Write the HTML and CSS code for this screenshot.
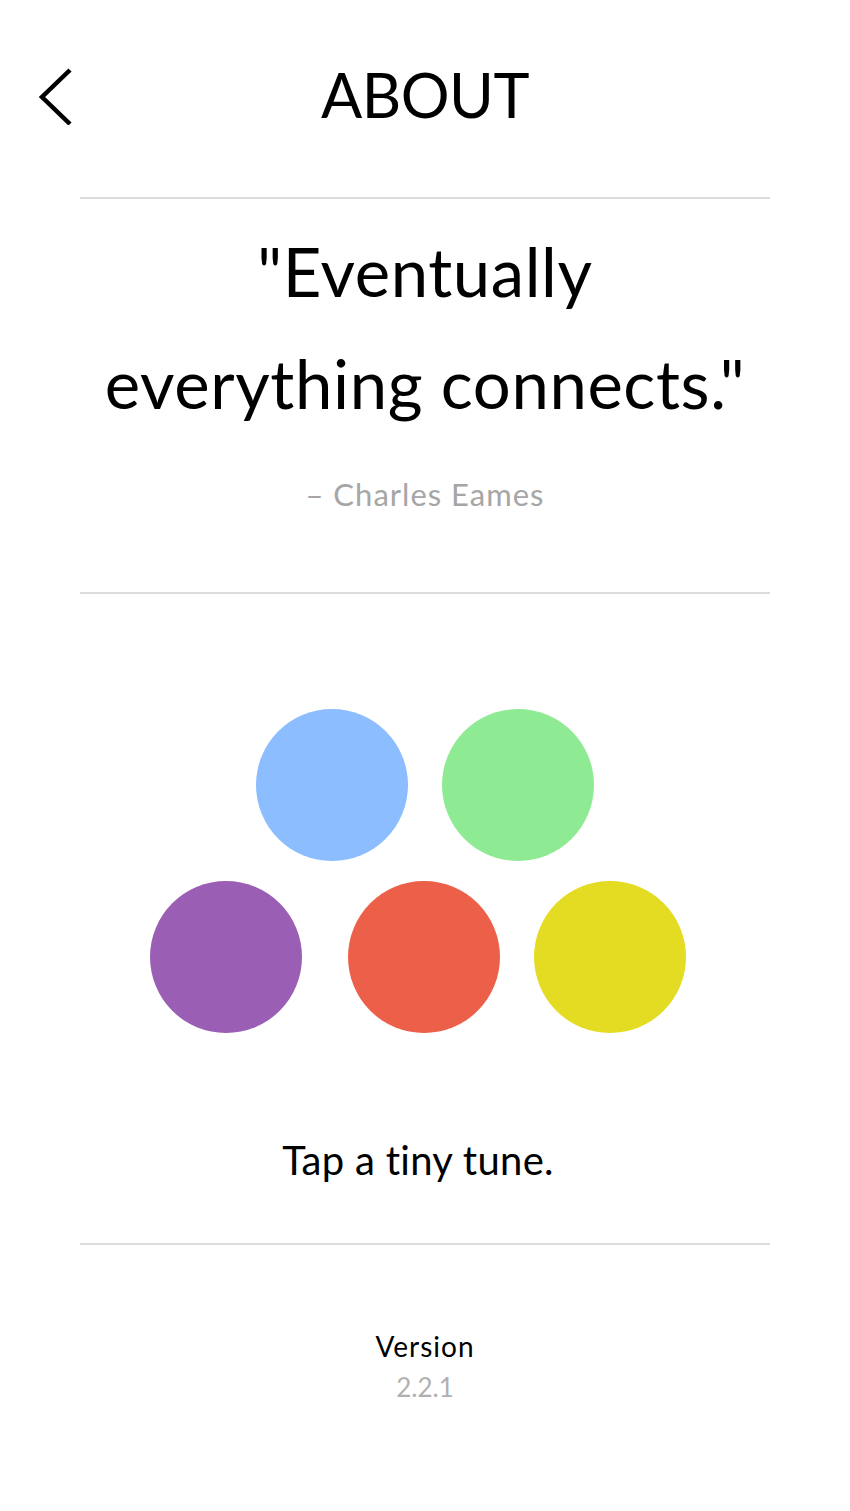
FILE: index.html
```html
<!DOCTYPE html>
<html>
<head>
<meta charset="utf-8">
<link rel="stylesheet" href="styles.css">
</head>
<body>
<div class="page">
  <header class="header">
    <a class="back" aria-label="Back">
      <svg width="40" height="60" viewBox="0 0 40 60"><path d="M33 5 L5 32 L33 59" fill="none" stroke="#000" stroke-width="4.5"/></svg>
    </a>
    <h1 class="title">ABOUT</h1>
    <span></span>
  </header>
  <div class="rule"></div>
  <section class="quote">
    <p class="quote-text">"Eventually<br>everything connects."</p>
    <p class="author">– Charles Eames</p>
  </section>
  <div class="rule"></div>
  <section class="tunes">
    <div class="dots">
      <div class="row">
        <span class="dot blue"></span>
        <span class="dot green"></span>
      </div>
      <div class="row row-bottom">
        <span class="dot purple"></span>
        <span class="dot red"></span>
        <span class="dot yellow"></span>
      </div>
    </div>
    <p class="tagline">Tap a tiny tune.</p>
  </section>
  <div class="rule"></div>
  <section class="version">
    <p class="version-label">Version</p>
    <p class="version-num">2.2.1</p>
  </section>
</div>
</body>
</html>
```

FILE: styles.css
```css
html, body {
  margin: 0;
  padding: 0;
  background: #fff;
}
body {
  font-family: Lato, "Open Sans", sans-serif;
  color: #000;
}
p, h1 { margin: 0; }
.page {
  width: 850px;
}
.header {
  display: grid;
  grid-template-columns: 1fr auto 1fr;
  align-items: center;
  height: 197px;
}
.back {
  display: block;
  width: 40px;
  height: 60px;
  margin-top: -8px;
  margin-left: 37px;
}
.back svg { display: block; }
.title {
  font-weight: 400;
  font-size: 61px;
  letter-spacing: -0.5px;
  margin-top: -8px;
  line-height: 1;
}
.rule {
  height: 2px;
  background: #dcdcdc;
  margin: 0 80px;
}
.quote {
  text-align: center;
  padding-top: 16px;
  height: 393px;
  box-sizing: border-box;
}
.quote-text {
  font-size: 67px;
  line-height: 112px;
  font-weight: 400;
  letter-spacing: 0.6px;
}
.author {
  margin-top: 36px;
  font-size: 31px;
  color: #a6a6a6;
  letter-spacing: 1px;
}
.tunes {
  height: 649px;
  box-sizing: border-box;
  padding-top: 115px;
}
.dots {
  display: flex;
  flex-direction: column;
  align-items: center;
  gap: 20px;
}
.row {
  display: flex;
  gap: 34px;
  justify-content: center;
}
.row-bottom {
  gap: 34px;
  margin-right: 14px;
}
.row-bottom .purple { margin-right: 12px; }
.dot {
  display: block;
  width: 152px;
  height: 152px;
  border-radius: 50%;
}
.blue { background: #8bbdff; }
.green { background: #8eea93; }
.purple { background: #9a5eb4; }
.red { background: #ec604a; }
.yellow { background: #e4dc23; }
.tagline {
  text-align: center;
  font-size: 40px;
  margin-top: 103px;
  letter-spacing: 0.3px;
  padding-right: 14px;
}
.version {
  text-align: center;
  padding-top: 83px;
}
.version-label {
  font-size: 28px;
  letter-spacing: 1px;
  line-height: 36px;
}
.version-num {
  font-size: 26px;
  color: #b0b0b0;
  line-height: 40px;
  margin-top: 3px;
}
```
